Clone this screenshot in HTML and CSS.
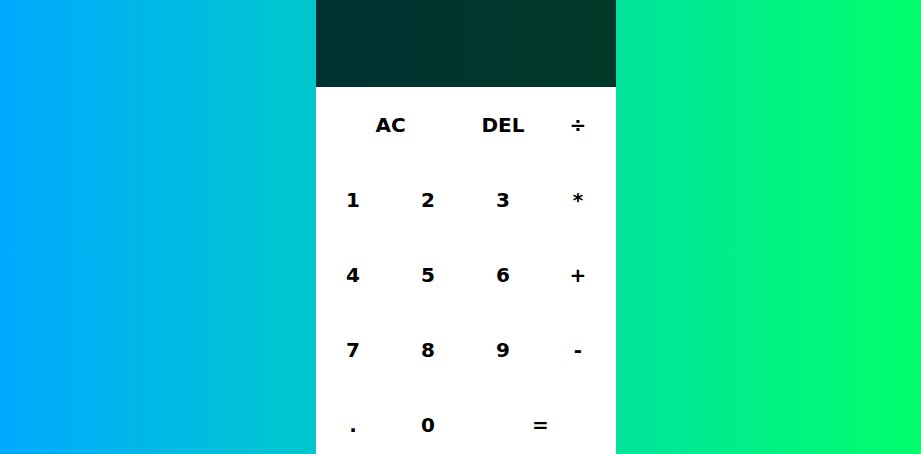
FILE: index.html
```html
<!DOCTYPE html>
<html lang="en">
<head>
<meta charset="utf-8">
<title>Calculator</title>
<link rel="stylesheet" href="styles.css">
</head>
<body>
<div class="calculator-grid">
  <div class="output">
    <div class="previous-operand"></div>
    <div class="current-operand"></div>
  </div>
  <button class="span-two">AC</button>
  <button>DEL</button>
  <button>÷</button>
  <button>1</button>
  <button>2</button>
  <button>3</button>
  <button>*</button>
  <button>4</button>
  <button>5</button>
  <button>6</button>
  <button>+</button>
  <button>7</button>
  <button>8</button>
  <button>9</button>
  <button>-</button>
  <button>.</button>
  <button>0</button>
  <button class="span-two">=</button>
</div>
</body>
</html>
```
FILE: styles.css
```css
*, *::before, *::after {
  box-sizing: border-box;
}

body {
  margin: 0;
  padding: 0;
  background: linear-gradient(to right, #00aaff, #00ff6c);
  font-family: "DejaVu Sans", sans-serif;
  font-weight: normal;
}

.calculator-grid {
  display: grid;
  justify-content: center;
  align-content: center;
  min-height: 100vh;
  padding-left: 10px;
  grid-template-columns: repeat(4, 75px);
  grid-template-rows: 87px repeat(5, 75px);
}

.calculator-grid > button {
  cursor: pointer;
  font-family: "DejaVu Sans", sans-serif;
  font-size: 20px;
  font-weight: bold;
  color: #000;
  border: none;
  outline: none;
  background-color: #fff;
  padding: 0;
  margin: 0;
}

.span-two {
  grid-column: span 2;
}

.output {
  grid-column: 1 / -1;
  background-color: rgba(0, 0, 0, 0.75);
  display: flex;
  align-items: flex-end;
  justify-content: space-around;
  flex-direction: column;
  padding: 10px;
  word-wrap: break-word;
  word-break: break-all;
}
```
